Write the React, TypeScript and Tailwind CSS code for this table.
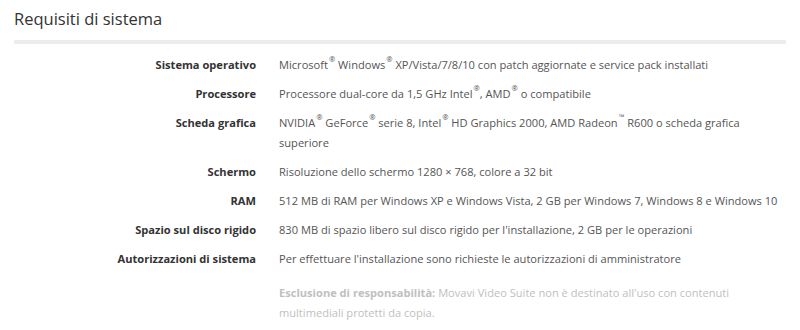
import React from 'react';

const rows: { label: string; value: React.ReactNode }[] = [
  {
    label: 'Sistema operativo',
    value: (
      <>
        Microsoft<sup>®</sup> Windows<sup>®</sup> XP/Vista/7/8/10 con patch aggiornate e service pack installati
      </>
    ),
  },
  {
    label: 'Processore',
    value: (
      <>
        Processore dual-core da 1,5 GHz Intel<sup>®</sup>, AMD<sup>®</sup> o compatibile
      </>
    ),
  },
  {
    label: 'Scheda grafica',
    value: (
      <>
        NVIDIA<sup>®</sup> GeForce<sup>®</sup> serie 8, Intel<sup>®</sup> HD Graphics 2000, AMD Radeon<sup>™</sup> R600 o scheda grafica superiore
      </>
    ),
  },
  { label: 'Schermo', value: 'Risoluzione dello schermo 1280 × 768, colore a 32 bit' },
  {
    label: 'RAM',
    value: '512 MB di RAM per Windows XP e Windows Vista, 2 GB per Windows 7, Windows 8 e Windows 10',
  },
  {
    label: 'Spazio sul disco rigido',
    value: "830 MB di spazio libero sul disco rigido per l'installazione, 2 GB per le operazioni",
  },
  {
    label: 'Autorizzazioni di sistema',
    value: "Per effettuare l'installazione sono richieste le autorizzazioni di amministratore",
  },
];

export default function App() {
  return (
    <div className="w-[800px] h-[330px] bg-white px-[14px] pt-[7px] font-['Open_Sans',sans-serif] overflow-hidden">
      {/* Header */}
      <h2 className="text-[16.5px] leading-6 text-[#333] font-normal">Requisiti di sistema</h2>
      <div className="mt-[9px] h-[4px] bg-[#ececec]" />

      {/* Specs table */}
      <div className="mt-[11px] grid grid-cols-[242px_503px] gap-x-[23px] gap-y-[9px] text-[11.1px] leading-5">
        {rows.map((r) => (
          <React.Fragment key={r.label}>
            <div className="text-right font-bold text-[#333]">{r.label}</div>
            <div className="text-[#555] [&_sup]:text-[7.5px] [&_sup]:align-[3px] [&_sup]:leading-none [&_sup]:ml-px">
              {r.value}
            </div>
          </React.Fragment>
        ))}
        <div />
        <div className="mt-[5px] pr-[30px] text-[#c0c0c0]">
          <b className="font-bold">Esclusione di responsabilità:</b>{' '}
          Movavi Video Suite non è destinato all'uso con contenuti multimediali protetti da copia.
        </div>
      </div>
    </div>
  );
}
